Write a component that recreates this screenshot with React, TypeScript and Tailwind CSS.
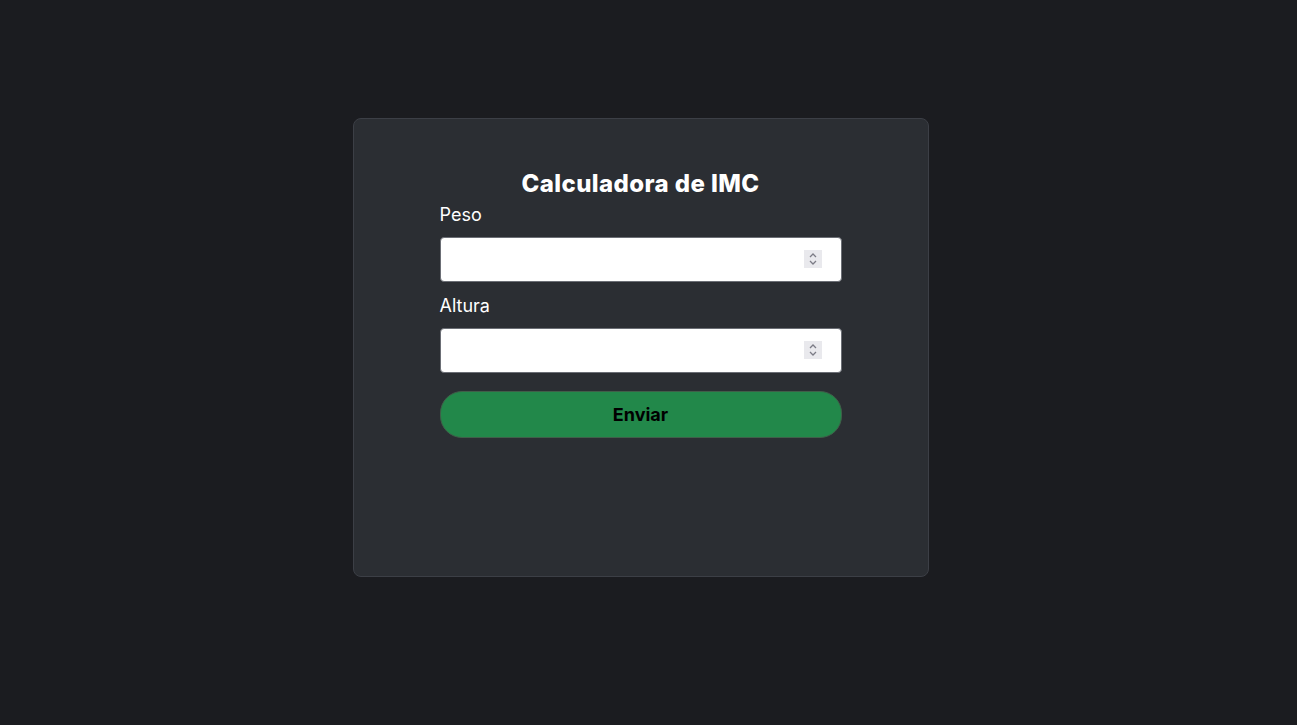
import React from "react";

function NumberField() {
  return (
    <div className="relative">
      <input
        type="text"
        inputMode="decimal"
        className="h-[45px] w-full rounded-[4px] border border-[#6b6e75] bg-white px-3 text-black outline-none"
      />
      {/* always-visible spinner like the native one */}
      <div className="pointer-events-none absolute right-[20px] top-[13px] flex h-[18px] w-[18px] flex-col items-center justify-center bg-[#e9e9ed]">
        <svg width="10" height="14" viewBox="0 0 10 14" fill="none" stroke="#7c7c86" strokeWidth="1.3">
          <path d="M2 5 L5 2 L8 5" />
          <path d="M2 9 L5 12 L8 9" />
        </svg>
      </div>
    </div>
  );
}

export default function App() {
  return (
    <div
      className="flex h-[725px] w-full items-start justify-center bg-[#1b1c20] pr-[16px] pt-[118px]"
      style={{ fontFamily: "Inter, 'Noto Sans', sans-serif" }}
    >
      <div className="flex h-[459px] w-[576px] flex-col items-center rounded-lg border border-[#3c3f46] bg-[#2b2e33] pt-[50px]">
        <form className="flex w-[402px] flex-col" onSubmit={(e) => e.preventDefault()}>
          <h1 className="text-center text-[24px] font-extrabold leading-[30px] tracking-[0.4px] text-white">
            Calculadora de IMC
          </h1>
          <label className="mt-[4px] text-[18px] leading-[24px] text-white">Peso</label>
          <div className="mt-[10px]">
            <NumberField />
          </div>
          <label className="mt-[12px] text-[18px] leading-[24px] text-white">Altura</label>
          <div className="mt-[10px]">
            <NumberField />
          </div>
          <button
            type="submit"
            className="mt-[18px] h-[47px] rounded-[22px] border border-[#3f5f49] bg-[#22884a] text-[18px] font-bold text-black"
          >
            Enviar
          </button>
        </form>
      </div>
    </div>
  );
}
